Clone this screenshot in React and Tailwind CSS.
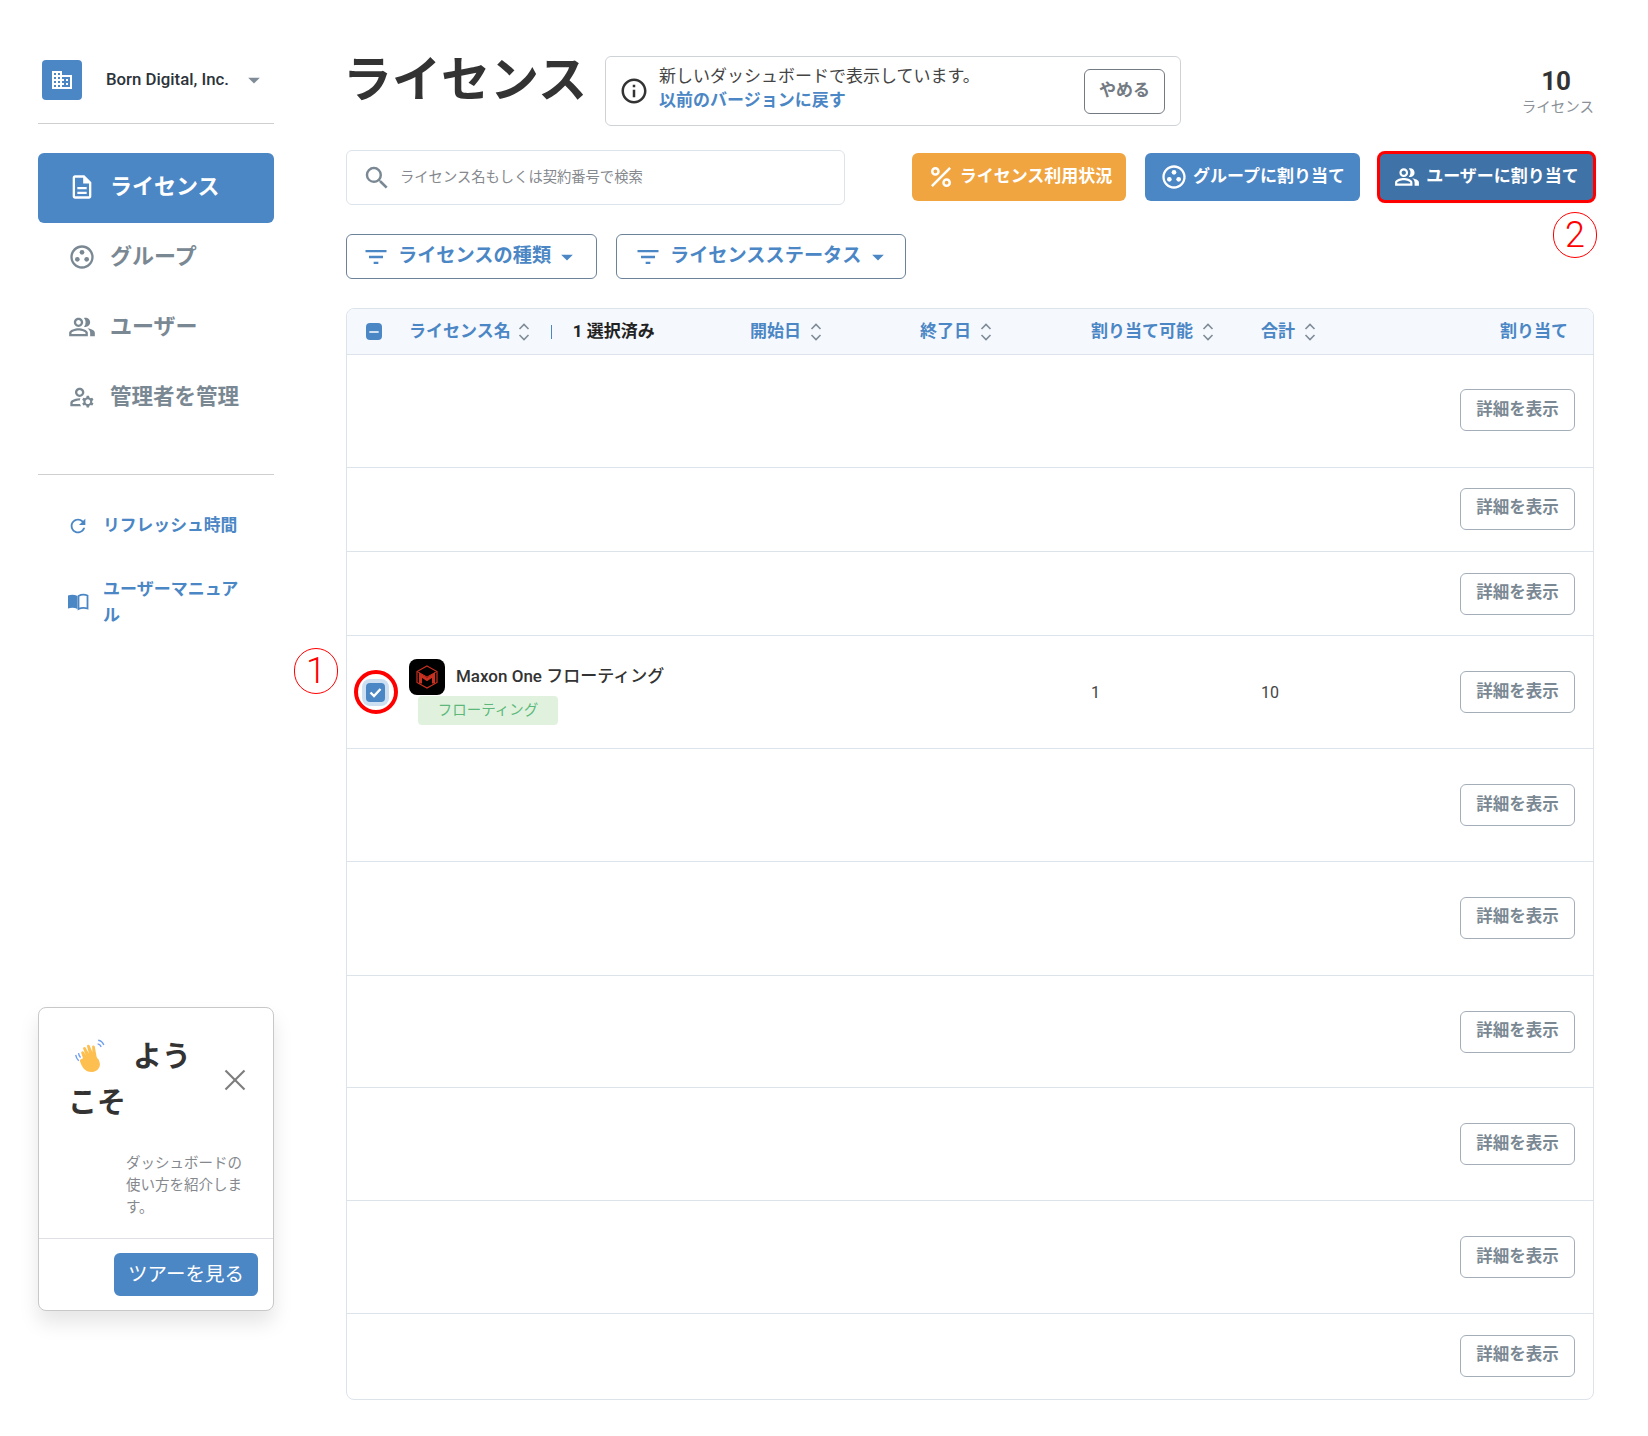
import React from 'react'
import {
  MdDomain,
  MdArrowDropDown,
  MdOutlineDescription,
  MdOutlineGroupWork,
  MdOutlinePeopleAlt,
  MdOutlineManageAccounts,
  MdRefresh,
  MdOutlineInfo,
  MdSearch,
  MdFilterList,
  MdPercent,
  MdRemove,
} from 'react-icons/md'

const SortIcon = () => (
  <svg width="14" height="20" viewBox="0 0 14 20" fill="none" stroke="#7f8c98" strokeWidth="1.6" className="shrink-0">
    <polyline points="2.5,7 7,2.5 11.5,7" />
    <polyline points="2.5,13 7,17.5 11.5,13" />
  </svg>
)

const BookIcon = () => (
  <svg width="22" height="18" viewBox="0 0 22 18" className="shrink-0">
    <path d="M1 2.5c3-1.2 6.500-1.200 9.500.5v13c-3-1.500-6.500-1.500-9.500-.5z" fill="#4b86c5" />
    <path d="M11.500 3c3-1.700 6-1.700 9-.5v13c-3-1-6-1-9 .5z" fill="none" stroke="#4b86c5" strokeWidth="1.800" />
  </svg>
)

const HandIcon = () => (
  <svg width="36" height="34" viewBox="0 0 32 30" className="inline-block align-[-6px] mr-[23px] ml-[6px]">
    <path
      d="M8 17l-1.500-4.500c-.5-1.500 1.500-2.300 2.300-1l1.800 3-2.400-5.700c-.6-1.500 1.500-2.500 2.300-1l2.800 5-1.700-6.300c-.4-1.600 1.800-2.200 2.400-.7l2.400 5.800-.3-4.600c-.1-1.600 2-1.800 2.400-.2l1.500 8.500c.3 1.500.9 2.100 1.900 2.900l1 3c.8 3-1.500 8-7.200 8-6 0-9-4.500-10.700-10.700z"
      fill="#fdbf4f"
    />
    <g fill="none" stroke="#6f9ff0" strokeWidth="1.200">
      <path d="M1.500 14c.3 2.200 1.200 3.800 2.700 5.200" />
      <path d="M4 12.500c.2 1.500.8 2.800 1.800 3.800" />
      <path d="M21.500 1c2.200.3 4.200 2 5 4.300" />
      <path d="M21 4.200c1.400.2 2.600 1.300 3.200 2.700" />
    </g>
  </svg>
)

const MaxonLogo = () => (
  <div className="w-9 h-9 rounded-lg bg-black flex items-center justify-center shrink-0">
    <svg width="26" height="26" viewBox="0 0 26 26" fill="none" stroke="#c9301f">
      <path d="M13 2l10 5.500v11L13 24 3 18.500v-11z" strokeWidth="1.200" />
      <path d="M3 7.500l10 5.500 10-5.500" strokeWidth="1" />
      <path d="M6.500 19.500V11l6.500 4.500L19.500 11v8.500" strokeWidth="3" />
    </svg>
  </div>
)

const rows = [
  'h-[113px] pb-[2px]',
  'h-[84px] pb-[2px]',
  'h-[84px]',
  'h-[113px]',
  'h-[113px]',
  'h-[114px] pb-[2px]',
  'h-[112px]',
  'h-[113px]',
  'h-[113px]',
  'h-[86px] pb-[2px]',
]

const nav = [
  { label: 'グループ', icon: MdOutlineGroupWork, text: 'mb-[2px] text-[22px]' },
  { label: 'ユーザー', icon: MdOutlinePeopleAlt, text: 'mb-[2px] text-[22px]' },
  { label: '管理者を管理', icon: MdOutlineManageAccounts, text: 'text-[21.500px]' },
]

const App = () => {
  return (
    <div className="relative flex min-h-[1436px] bg-white text-[#333] font-[Roboto,'Noto_Sans_CJK_JP',sans-serif]">
      {/* Sidebar */}
      <aside className="ml-[38px] w-[236px] shrink-0 flex flex-col pt-[60px]">
        <div className="flex items-center pl-1 h-10">
          <div className="w-10 h-10 rounded bg-[#4b86c5] flex items-center justify-center">
            <MdDomain className="text-[24px] text-white" />
          </div>
          <span className="ml-6 text-[16.800px] font-medium text-[#2c333a]">Born Digital, Inc.</span>
          <MdArrowDropDown className="ml-[11px] text-[28px] text-[#7f8c98]" />
        </div>
        <div className="mt-[23px] border-b border-[#cfcfcf]" />

        <div className="mt-[29px] h-[70px] rounded-md bg-[#4b86c5] flex items-center pl-[30px] pb-[2px] text-white">
          <MdOutlineDescription className="text-[28px]" />
          <span className="ml-[14px] mb-[2px] text-[22px] font-bold">ライセンス</span>
        </div>
        {nav.map((item) => (
          <div key={item.label} className="h-[70px] flex items-center pl-[30px] pb-[2px] text-[#7a8893]">
            <item.icon className="text-[28px]" />
            <span className={`ml-[14px] ${item.text} font-bold`}>{item.label}</span>
          </div>
        ))}

        <div className="mt-[41px] border-b border-[#cfcfcf]" />

        <div className="mt-[31px] h-10 flex items-center pl-[29px] text-[#4b86c5]">
          <MdRefresh className="text-[22px]" />
          <span className="ml-[14px] text-[16.800px] font-bold">リフレッシュ時間</span>
        </div>
        <div className="mt-[30px] flex items-center pl-[29px] text-[#4b86c5]">
          <BookIcon />
          <span className="ml-[14px] w-[140px] text-[17px] leading-[26px] font-bold">ユーザーマニュアル</span>
        </div>

        <div className="mt-auto mb-[125px] rounded-lg border border-[#c8c8c8] shadow-[0_12px_20px_rgba(0,0,0,0.1)] bg-white">
          <div className="flex items-center pl-[29px] pr-[27px] pt-[26px]">
            <h2 className="w-[140px] text-[29px] font-bold leading-[46px] text-[#333]">
              <HandIcon />
              ようこそ
            </h2>
            <svg width="22" height="22" viewBox="0 0 22 22" stroke="#7d7d7d" strokeWidth="2.200" className="ml-auto">
              <line x1="1.500" y1="1.500" x2="20.500" y2="20.500" />
              <line x1="20.500" y1="1.500" x2="1.500" y2="20.500" />
            </svg>
          </div>
          <p className="mt-[27px] pl-[87px] pr-[30px] text-[14.500px] leading-[22px] text-[#85888d]">
            ダッシュボードの使い方を紹介します。
          </p>
          <div className="mt-[19px] border-t border-[#dfe0e6] flex justify-end px-[15px] pt-[14px] pb-[14px]">
            <button className="w-[144px] h-[43px] rounded-md bg-[#4b86c5] text-white text-[19.500px]">ツアーを見る</button>
          </div>
        </div>
      </aside>

      {/* Main */}
      <main className="ml-[72px] w-[1248px] shrink-0 pt-[56px]">
        <div className="flex items-start">
          <h1 className="w-[260px] text-[49px] leading-[50px] -ml-[3px] mr-[2px] font-bold text-[#333]">ライセンス</h1>
          <div className="w-[576px] h-[70px] rounded-md border border-[#cfd3d7] flex items-center pl-[13px] pr-[15px]">
            <MdOutlineInfo className="text-[30px] text-[#333]" />
            <div className="ml-[10px] mb-[6px] text-[17px] leading-[24px]">
              <div className="text-[#444]">新しいダッシュボードで表示しています。</div>
              <div className="font-bold text-[#4b86c5]">以前のバージョンに戻す</div>
            </div>
            <button className="ml-auto w-[81px] h-[45px] rounded-md border border-[#737a82] text-[17px] font-bold text-[#737a82]">
              やめる
            </button>
          </div>
          <div className="ml-auto text-right mt-[8px]">
            <div className="pr-[23px] text-[26px] leading-[34px] font-bold text-[#333]">10</div>
            <div className="text-[14.500px] leading-[20px] text-[#8b9198]">ライセンス</div>
          </div>
        </div>

        <div className="mt-[24px] flex items-start">
          <div className="w-[499px] h-[55px] rounded-md border border-[#dde3ea] flex items-center pl-[15px]">
            <MdSearch className="text-[30px] text-[#7a8893]" />
            <span className="ml-[8px] text-[14.300px] text-[#85888d]">ライセンス名もしくは契約番号で検索</span>
          </div>
          <div className="ml-auto mt-[3px] flex gap-[19px]">
            <button className="w-[214px] h-[48px] rounded-md bg-[#f0a541] text-white flex items-center justify-center text-[17px] font-bold">
              <MdPercent className="text-[30px] mr-[4px]" />
              ライセンス利用状況
            </button>
            <button className="w-[215px] h-[48px] rounded-md bg-[#4b86c5] text-white flex items-center justify-center text-[17px] font-bold">
              <MdOutlineGroupWork className="text-[28px] mr-[5px]" />
              グループに割り当て
            </button>
            <button className="w-[215px] h-[48px] rounded-md bg-[#3f72a6] text-white flex items-center justify-center text-[17px] font-bold outline-[3px] outline-offset-[-1px] outline-[#f00] shadow-[0_0_3px_#f00]">
              <MdOutlinePeopleAlt className="text-[26px] mr-[6px]" />
              ユーザーに割り当て
            </button>
          </div>
        </div>

        <div className="mt-[29px] flex gap-[19px]">
          <button className="w-[251px] h-[45px] rounded-md border border-[#6b8299] flex items-center pl-[15px] text-[#4b86c5] text-[19.200px] font-bold">
            <MdFilterList className="text-[28px] mr-[8px]" />
            ライセンスの種類
            <MdArrowDropDown className="ml-[2px] text-[28px]" />
          </button>
          <button className="w-[290px] h-[45px] rounded-md border border-[#6b8299] flex items-center pl-[17px] text-[#4b86c5] text-[19.200px] font-bold">
            <MdFilterList className="text-[28px] mr-[8px]" />
            ライセンスステータス
            <MdArrowDropDown className="ml-[2px] text-[28px]" />
          </button>
        </div>

        {/* Table */}
        <div className="mt-[29px] rounded-lg border border-[#dde3ea] overflow-hidden">
          <div className="h-[45px] bg-[#f5f8fd] flex items-center text-[17px] font-bold text-[#4b86c5]">
            <div className="w-[62px] pl-[19px]">
              <div className="w-[16px] h-[17px] rounded bg-[#4b86c5] flex items-center justify-center">
                <MdRemove className="text-[16px] text-white" />
              </div>
            </div>
            <div className="w-[341px] flex items-center">
              <span>ライセンス名</span>
              <span className="ml-[6px]"><SortIcon /></span>
              <span className="ml-[20px] w-px h-[14px] bg-[#4b86c5]" />
              <span className="ml-[21px] text-[#222]">1 選択済み</span>
            </div>
            <div className="w-[170px] flex items-center gap-[8px]">開始日<SortIcon /></div>
            <div className="w-[171px] flex items-center gap-[8px]">終了日<SortIcon /></div>
            <div className="w-[170px] flex items-center gap-[8px]">割り当て可能<SortIcon /></div>
            <div className="flex items-center gap-[8px]">合計<SortIcon /></div>
            <div className="ml-auto pr-[25px]">割り当て</div>
          </div>

          {rows.map((h, i) => (
            <div key={i} className={`${h} border-t border-[#dde3ea] flex items-center`}>
              {i === 3 && (
                <>
                  <div className="w-[62px] pl-[19px]">
                    <div className="relative w-[19px] h-[19px] rounded bg-[#4b86c5] ring-[4px] ring-[#cddff0] flex items-center justify-center">
                      <svg width="13" height="11" viewBox="0 0 13 11" fill="none" stroke="white" strokeWidth="2.400">
                        <polyline points="1.500,5.500 5,9 11.500,2" />
                      </svg>
                      <div className="absolute left-1/2 top-1/2 w-[44px] h-[44px] -translate-x-1/2 -translate-y-1/2 rounded-full border-[4px] border-[#f00]" />
                    </div>
                  </div>
                  <div className="w-[341px]">
                    <div className="flex items-center">
                      <MaxonLogo />
                      <span className="ml-[11px] text-[17px] font-medium text-[#333]">Maxon One フローティング</span>
                    </div>
                    <div className="ml-[9px] mt-[1px] w-[140px] h-[29px] rounded bg-[#e0f2de] flex items-center justify-center text-[14.500px] text-[#5cb87a]">
                      フローティング
                    </div>
                  </div>
                  <div className="w-[170px]" />
                  <div className="w-[171px]" />
                  <div className="w-[170px] pt-[1px] text-[16px] text-[#444]">1</div>
                  <div className="pt-[1px] text-[16px] text-[#444]">10</div>
                </>
              )}
              <button className="ml-auto mr-[18px] w-[115px] h-[42px] rounded-md border border-[#a3aeb9] text-[16.500px] font-bold text-[#7a8893]">
                詳細を表示
              </button>
            </div>
          ))}
        </div>
      </main>

      {/* Annotations */}
      <div className="absolute left-[294px] top-[648px] w-[44px] h-[46px] rounded-full border border-[#f00] flex items-center justify-center text-[36px] font-light text-[#f00]">
        1
      </div>
      <div className="absolute left-[1553px] top-[212px] w-[44px] h-[46px] rounded-full border border-[#f00] flex items-center justify-center text-[36px] font-light text-[#f00]">
        2
      </div>
    </div>
  )
}

export default App
